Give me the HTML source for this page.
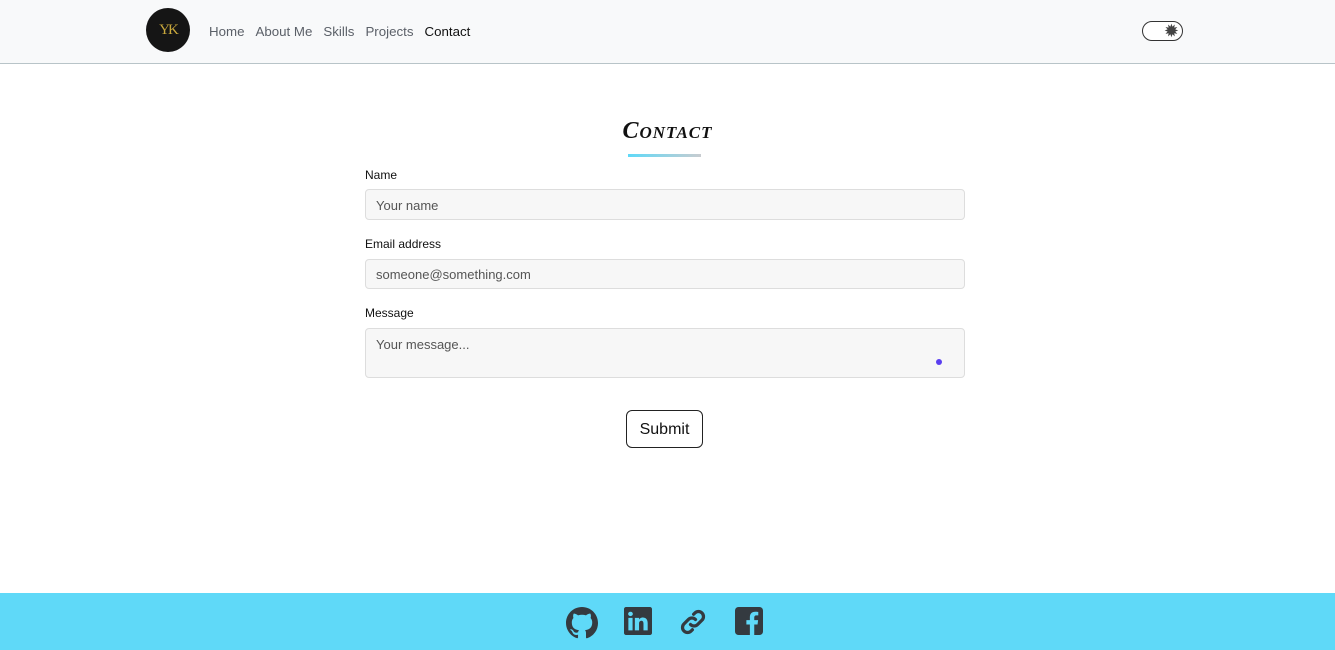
<!DOCTYPE html>
<html><head><meta charset="utf-8"><style>
*{box-sizing:border-box;margin:0;padding:0}
body{width:1335px;height:650px;overflow:hidden;background:#fff;font-family:"Liberation Sans",sans-serif;position:relative}
.nav{height:64px;background:#f8f9fa;border-bottom:1px solid #b8c4c8;position:relative}
.logo{position:absolute;left:146px;top:8px;width:44px;height:44px;border-radius:50%;background:#151515;color:#c9a83c;font:15px "Liberation Serif",serif;text-align:center;line-height:44px;letter-spacing:-2px}
.links{position:absolute;left:209px;top:24px;font-size:13.3px;color:#5b6068}
.links span{margin-right:11px}
.links .act{color:#111}
.tog{position:absolute;left:1142px;top:21px;width:41px;height:20px;border:1px solid #333;border-radius:10px;background:#fff}
.tog span{position:absolute;right:3px;top:0;font-size:18px;line-height:18px;color:#444}
h1{position:absolute;left:0;width:1335px;top:118px;text-align:center;font:italic bold 24px "Liberation Serif",serif;font-variant:small-caps;letter-spacing:1px;color:#111}
.bar{position:absolute;left:628px;top:154px;width:73px;height:3px;background:linear-gradient(90deg,#5fd9f8,#c8ccd0)}
label{position:absolute;left:365px;font-size:12px;color:#111}
.in{position:absolute;left:365px;width:600px;background:#f7f7f7;border:1px solid #ddd;border-radius:4px;font-size:13px;color:#555;padding-left:10px}
.btn{position:absolute;left:626px;top:410px;width:77px;height:38px;border:1px solid #222;border-radius:6px;text-align:center;line-height:38px;font-size:16px;color:#111}
.foot{position:absolute;left:0;top:593px;width:1335px;height:57px;background:#5fd9f8}
.foot svg{position:absolute;top:14px}
</style></head><body>
<div class="nav"><div class="logo">YK</div>
<div class="links"><span>Home</span><span>About Me</span><span>Skills</span><span>Projects</span><span class="act">Contact</span></div>
<div class="tog"><span>✹</span></div></div>
<h1>Contact</h1><div class="bar"></div>
<label style="top:168px">Name</label>
<div class="in" style="top:189px;height:31px;line-height:31px">Your name</div>
<label style="top:237px">Email address</label>
<div class="in" style="top:259px;height:30px;line-height:30px">someone@something.com</div>
<label style="top:306px">Message</label>
<div class="in" style="top:328px;height:50px;padding-top:8px">Your message...<span style="position:absolute;right:22px;top:30px;width:6px;height:6px;border-radius:50%;background:#5a3ef0"></span></div>
<div class="btn">Submit</div>
<div class="foot">
<svg style="left:566px" width="32" height="32" viewBox="0 0 16 16" fill="#343a40"><path d="M8 0C3.58 0 0 3.58 0 8c0 3.54 2.29 6.530 5.47 7.59.4.07.55-.17.55-.38v-1.33c-2.230.48-2.7-1.07-2.7-1.07-.36-.92-.89-1.17-.89-1.17-.73-.5.06-.49.06-.49.8.06 1.23.83 1.23.83.71 1.22 1.87.87 2.33.66.07-.52.28-.87.5-1.07-1.78-.2-3.64-.89-3.64-3.95 0-.87.31-1.59.82-2.15-.08-.2-.36-1.02.08-2.12 0 0 .67-.21 2.2.82a7.6 7.6 0 014 0c1.53-1.04 2.2-.82 2.2-.82.44 1.1.16 1.92.08 2.12.51.56.82 1.27.82 2.15 0 3.07-1.87 3.75-3.65 3.95.29.25.54.73.54 1.48v2.2c0 .21.15.46.55.38A8 8 0 0016 8c0-4.42-3.58-8-8-8z"/></svg>
<svg style="left:624px" width="28" height="28" viewBox="0 0 16 16" fill="#343a40"><path d="M0 1.15C0 .5.5 0 1.2 0h13.6c.7 0 1.2.5 1.2 1.15v13.7c0 .65-.5 1.150-1.2 1.15H1.2C.5 16 0 15.5 0 14.85zm4.9 12.2V6.2H2.5v7.15zM3.7 5.2c.84 0 1.36-.55 1.36-1.24-.02-.7-.52-1.24-1.34-1.24S2.36 3.26 2.36 3.960c0 .69.52 1.24 1.32 1.24zm4.9 8.15v-4c0-.21.02-.43.08-.58.17-.43.57-.88 1.23-.88.87 0 1.22.66 1.22 1.63v3.83h2.4V9.25c0-2.2-1.18-3.22-2.75-3.22-1.27 0-1.84.7-2.16 1.19V6.2H6.2c.03.67 0 7.15 0 7.15z"/></svg>
<svg style="left:678px" width="30" height="30" viewBox="0 0 24 24" fill="none" stroke="#343a40" stroke-width="2.6" stroke-linecap="round"><path d="M10 14a4 4 0 005.7 0l3.5-3.5a4 4 0 00-5.7-5.7l-1 1"/><path d="M14 10a4 4 0 00-5.7 0l-3.5 3.5a4 4 0 005.7 5.7l1-1"/></svg>
<svg style="left:735px" width="28" height="28" viewBox="0 0 16 16" fill="#343a40"><path d="M14 0H2a2 2 0 00-2 2v12a2 2 0 002 2h6.5v-6H6.5V7.5h2V5.8c0-2 1.2-3.1 3-3.1.9 0 1.8.1 1.8.1v2h-1c-1 0-1.3.6-1.3 1.3v1.4h2.2L12.9 10H11v6h3a2 2 0 002-2V2a2 2 0 00-2-2z"/></svg>
</div>
</body></html>
